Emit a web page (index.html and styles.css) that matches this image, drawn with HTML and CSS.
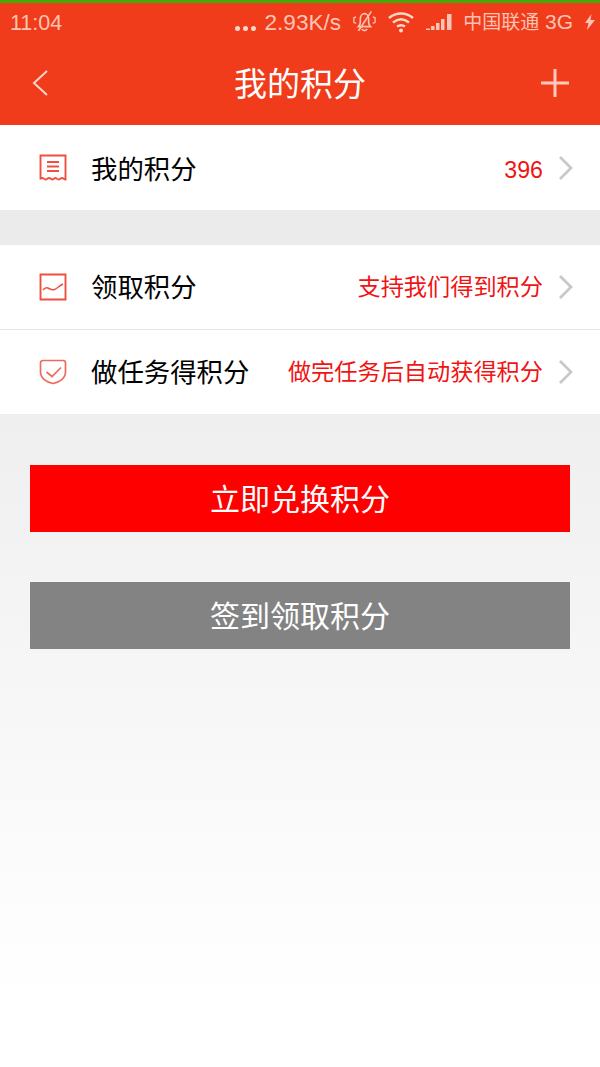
FILE: index.html
```html
<!DOCTYPE html>
<html lang="zh-CN">

<head>
  <meta charset="UTF-8">
  <meta name="viewport" content="width=device-width, initial-scale=1.0">
  <title>我的积分</title>
  <link rel="stylesheet" href="styles.css">
</head>

<body>
  <div class="status-bar">
    <span class="clock">11:04</span>
    <div class="status-right">
      <span class="dots"><i></i><i></i><i></i></span>
      <span class="speed">2.93K/s</span>
      <!-- muted bell -->
      <svg class="st-icon mute" width="24" height="23" viewBox="0 0 26 24" fill="none" stroke="#fcc4b4" stroke-width="1.800">
        <path d="M7 17.500c1.500-1.500 2-3 2-5V9c0-3 2-5.500 4.500-5.500S18 6 18 9v3.500c0 2 .5 3.500 2 5z" />
        <path d="M10.500 20c1.500 2.500 4.500 2.500 6 0" />
        <path d="M21 1L7 22" />
        <path d="M4.500 7L2 8v5l2.500 1M22.500 7L25 8v5l-2.500 1" stroke-width="1.400" />
      </svg>
      <!-- wifi -->
      <svg class="st-icon wifi" width="28" height="22" viewBox="0 0 28 22" fill="none" stroke="#fcd8cc" stroke-width="2.400">
        <path d="M2 7c7-6 17-6 24 0" />
        <path d="M6 11.500c5-4 11-4 16 0" />
        <path d="M10 15.500c3-2 5-2 8 0" />
        <circle cx="14" cy="19.500" r="2" fill="#fcd8cc" stroke="none" />
      </svg>
      <!-- signal -->
      <svg class="st-icon signal" width="27" height="18" viewBox="0 0 27 18" fill="#fcc4b4">
        <path d="M0 15.500h4V17H0z" />
        <rect x="5" y="13" width="3.500" height="4" />
        <rect x="10" y="10" width="3.500" height="7" />
        <rect x="15" y="6" width="3.500" height="11" />
        <rect x="21" y="1" width="4.500" height="16" />
      </svg>
      <span class="carrier"><span class="carrier-name">中国联通</span> 3G</span>
      <svg class="st-icon bolt" width="10" height="16" viewBox="0 0 10 16" fill="#fcc4b4">
        <path d="M6.500 0L0 9h3.500L2 16l8-10H5.500z" />
      </svg>
    </div>
  </div>

  <header class="title-bar">
    <svg class="back" width="18" height="28" viewBox="0 0 18 28" fill="none" stroke="#fbd5c9" stroke-width="2">
      <path d="M16 2L3 14l13 12" />
    </svg>
    <h1>我的积分</h1>
    <svg class="plus" width="30" height="30" viewBox="0 0 30 30" fill="none" stroke="#fbcabb" stroke-width="3">
      <path d="M15 1v28M1 15h28" />
    </svg>
  </header>

  <section class="group group-points">
    <div class="row">
      <svg class="row-icon" width="28" height="28" viewBox="0 0 28 28" fill="none" stroke="#ee4f40" stroke-width="1.900">
        <path d="M1.500 1.500h25v24c-1.500 0-2-1.500-3.500-1.500s-2 1.500-3.500 1.500-2-1.500-3-1.500-2 1.500-3 1.500-2-1.500-3.500-1.500-2 1.500-3.500 1.500-2-1.500-3-1.500-1.500.5-2 .5z" />
        <path d="M8 8h12M8 12.500h12M8 17h12" />
      </svg>
      <span class="row-label">我的积分</span>
      <span class="row-value">396</span>
      <svg class="chev" width="16" height="26" viewBox="0 0 16 26" fill="none" stroke="#c8c8c8" stroke-width="2.800">
        <path d="M2 2l11 11L2 24" />
      </svg>
    </div>
  </section>

  <section class="group">
    <div class="row">
      <svg class="row-icon" width="28" height="28" viewBox="0 0 28 28" fill="none" stroke="#ee4f40" stroke-width="1.900">
        <path d="M1.500 1.500h25v25h-25z" />
        <path d="M4 17c1.500-2 3-3 5-2s4 2.500 6.500 1.500S20 13 24 11" stroke-width="1.500" />
      </svg>
      <span class="row-label">领取积分</span>
      <span class="row-value">支持我们得到积分</span>
      <svg class="chev" width="16" height="26" viewBox="0 0 16 26" fill="none" stroke="#c8c8c8" stroke-width="2.800">
        <path d="M2 2l11 11L2 24" />
      </svg>
    </div>
    <div class="row">
      <svg class="row-icon" width="28" height="28" viewBox="0 0 28 28" fill="none" stroke="#ee6a5c" stroke-width="1.700">
        <path d="M4 2.500h20c1.500 0 2.500 1 2.500 2.500v9c0 6-6 10.500-12.500 11.500C7.500 24.500 1.500 20 1.500 14V5c0-1.500 1-2.500 2.500-2.500z" />
        <path d="M7.500 14l5.500 4.500 9-9" />
      </svg>
      <span class="row-label">做任务得积分</span>
      <span class="row-value">做完任务后自动获得积分</span>
      <svg class="chev" width="16" height="26" viewBox="0 0 16 26" fill="none" stroke="#c8c8c8" stroke-width="2.800">
        <path d="M2 2l11 11L2 24" />
      </svg>
    </div>
  </section>

  <div class="actions">
    <button class="btn btn-red">立即兑换积分</button>
    <button class="btn btn-gray">签到领取积分</button>
  </div>
</body>

</html>
```

FILE: styles.css
```css
* {
  margin: 0;
  padding: 0;
  box-sizing: border-box;
}

body {
  width: 600px;
  height: 1067px;
  overflow: hidden;
  font-family: "Liberation Sans", "Noto Sans CJK SC", sans-serif;
  background: linear-gradient(#ebebeb 0, #ebebeb 414px, #efefef 414px, #ffffff 1000px);
}

.status-bar {
  height: 44px;
  padding: 0 5px 1px 10px;
  display: flex;
  align-items: center;
  justify-content: space-between;
  background-color: #f03c1a;
  border-top: 3px solid #46a80a;
  font-size: 21.500px;
  color: #fcc4b4;
}

.status-right {
  display: flex;
  align-items: center;
}

.dots {
  display: flex;
  gap: 3px;
  margin-right: 9px;
  align-self: flex-end;
  padding-bottom: 8px;
}

.dots i {
  width: 5px;
  height: 5px;
  border-radius: 50%;
  background-color: #fcd8cc;
}

.speed {
  font-size: 22.600px;
}

.mute {
  margin-left: 11px;
  margin-bottom: 3px;
}

.wifi {
  margin-left: 11px;
  margin-bottom: 3px;
}

.signal {
  margin-left: 11px;
  margin-bottom: 2px;
}

.carrier {
  margin-left: 10px;
  padding-bottom: 5px;
  font-size: 21px;
}

.carrier-name {
  font-size: 19px;
}

.bolt {
  margin-left: 12px;
  margin-bottom: 2px;
}

.title-bar {
  height: 81px;
  padding: 0 30px 3px 31px;
  display: flex;
  align-items: center;
  justify-content: space-between;
  background-color: #f03c1a;
}

.title-bar h1 {
  padding-bottom: 2px;
  font-size: 33px;
  font-weight: 400;
  color: #fff;
}

.back {
  margin-right: 11px;
}

.group {
  margin-bottom: 35px;
  background-color: #fff;
}

.row {
  height: 85px;
  padding: 0 26px 0 39px;
  display: flex;
  align-items: center;
  border-bottom: 1px solid #e6e6e6;
}

.row + .row {
  height: 84px;
}

.row:last-child {
  border-bottom: none;
}

.row-label {
  flex: 1;
  margin-left: 24px;
  padding-bottom: 4px;
  font-size: 26.400px;
  color: #000;
}

.row-value {
  padding-bottom: 4px;
  font-size: 23.200px;
  color: #f01414;
}

.group-points .row-label {
  padding-bottom: 1px;
}

.group-points .row-value {
  padding-bottom: 0;
  padding-top: 5px;
}

.chev {
  margin-left: 15px;
}

.actions {
  margin-top: 51px;
  padding: 0 30px;
  display: flex;
  flex-direction: column;
  gap: 50px;
}

.btn {
  height: 67px;
  padding-bottom: 4px;
  border: none;
  font-family: inherit;
  font-size: 30px;
  color: #fff;
}

.btn-red {
  background-color: #ff0000;
}

.btn-gray {
  background-color: #838383;
}
```
